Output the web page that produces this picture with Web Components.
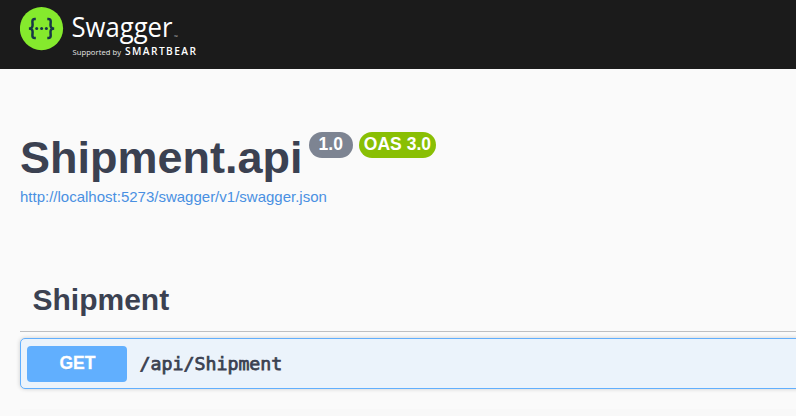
<!DOCTYPE html>
<html lang="en">
<head>
<meta charset="utf-8">
<title>Swagger UI</title>
<style>
html,body{margin:0;height:100%;overflow:hidden}
body{background:#fafafa;color:#3b4151;font-family:"Liberation Sans",Arial,sans-serif}
</style>
</head>
<body>
<swagger-page></swagger-page>
<script>
const define = (name, html) => {
  const t = document.createElement('template');
  t.innerHTML = html;
  customElements.define(name, class extends HTMLElement {
    constructor() {
      super();
      this.attachShadow({mode: 'open'}).append(t.content.cloneNode(true));
    }
  });
};

define('swagger-logo', `
<style>:host{display:block;width:180px;height:56px}svg{display:block}</style>
<svg width="180" height="56" viewBox="20 4 180 56">
  <circle cx="41.5" cy="28.6" r="21.6" fill="#85ea2d"/>
  <g fill="none" stroke="#173647" stroke-width="2.5">
    <path d="M35.8 18.9H34.8Q32.3 18.9 32.4 21.7L32.6 25Q32.7 28.5 28.9 28.5Q32.7 28.5 32.6 32L32.4 35.3Q32.3 38.1 34.8 38.1H35.8"/>
    <path d="M47.3 18.9H48.3Q50.8 18.9 50.7 21.7L50.5 25Q50.4 28.5 54.2 28.5Q50.4 28.5 50.5 32L50.7 35.3Q50.8 38.1 48.3 38.1H47.3"/>
  </g>
  <g fill="#173647"><circle cx="36.7" cy="28.5" r="1.5"/><circle cx="41.6" cy="28.5" r="1.5"/><circle cx="46.4" cy="28.5" r="1.5"/></g>
  <g fill="#fff" font-family="Open Sans, sans-serif">
    <text x="71.5" y="37" font-size="27.5" textLength="101" lengthAdjust="spacingAndGlyphs">Swagger</text>
    <text x="174" y="39" font-size="5" fill="#bbb">™</text>
    <text x="72.5" y="54.7" font-size="7.6" textLength="48.5" fill="#e8e8e8">Supported by</text>
    <text x="125" y="54.9" font-size="10.2" font-weight="600" textLength="71" font-family="Open Sans, sans-serif" lengthAdjust="spacing">SMARTBEAR</text>
  </g>
</svg>`);

define('top-bar', `
<style>:host{display:block;box-sizing:border-box;height:69px;padding:4px 20px;background:#1b1b1b}</style>
<slot></slot>`);

define('version-badge', `
<style>
:host{display:block;box-sizing:border-box;height:26px;padding:0 var(--pad,5px);border-radius:13px;background:var(--badge,#7d8492);color:#fff;font-weight:700;font-size:17.5px;line-height:24px;white-space:nowrap}
</style><slot></slot>`);

define('api-info', `
<style>
:host{display:block;padding:63px 20px 0}
.row{display:flex;align-items:flex-start;gap:6px}
h1{margin:-1px 0 0;font-size:45px;line-height:54px;font-weight:700;white-space:nowrap}
.url{margin-top:3px;font-size:15px;line-height:18px;color:#4990e2}
</style>
<div class="row"><h1><slot name="title"></slot></h1><slot name="badges"></slot></div>
<div class="url"><slot name="url"></slot></div>`);

define('tag-section', `
<style>
:host{display:block;padding:70px 0 0 20px}
h2{margin:0 0 6px;padding:0 0 0 12.5px;height:55px;border-bottom:1px solid #bebfc2;font-size:30px;line-height:48px;font-weight:700}
.next{margin-top:20px;height:8px;background:#f8f8f8}
</style>
<h2><slot name="name"></slot></h2>
<slot></slot><div class="next"></div>`);

define('api-operation', `
<style>
:host{display:flex;align-items:center;box-sizing:border-box;height:51px;margin-right:-20px;padding:0 6px;border:1px solid #61affe;border-radius:5px;background:#ebf3fb;box-shadow:0 0 4px rgba(0,0,0,.19)}
.method{box-sizing:border-box;width:100px;height:36px;border-radius:4px;background:#61affe;color:#fff;text-align:center;font-size:17.5px;line-height:34px;font-weight:700;text-shadow:0 1px 0 rgba(0,0,0,.1);-webkit-text-stroke:.3px #fff;padding-left:1px}
.path{margin-left:12.5px;font:400 18.25px/24px "DejaVu Sans Mono",monospace;-webkit-text-stroke:.75px currentColor}
</style>
<div class="method"><slot name="method"></slot></div>
<div class="path"><slot name="path"></slot></div>`);

define('swagger-page', `
<style>:host{display:block}.v{--pad:10px}.oas{--badge:#89bf04}</style>
<top-bar><swagger-logo></swagger-logo></top-bar>
<api-info>
  <span slot="title">Shipment.api</span>
  <version-badge slot="badges" class="v">1.0</version-badge>
  <version-badge slot="badges" class="oas">OAS 3.0</version-badge>
  <span slot="url">http://localhost:5273/swagger/v1/swagger.json</span>
</api-info>
<tag-section>
  <span slot="name">Shipment</span>
  <api-operation><span slot="method">GET</span><span slot="path">/api/Shipment</span></api-operation>
</tag-section>`);
</script>
</body>
</html>
